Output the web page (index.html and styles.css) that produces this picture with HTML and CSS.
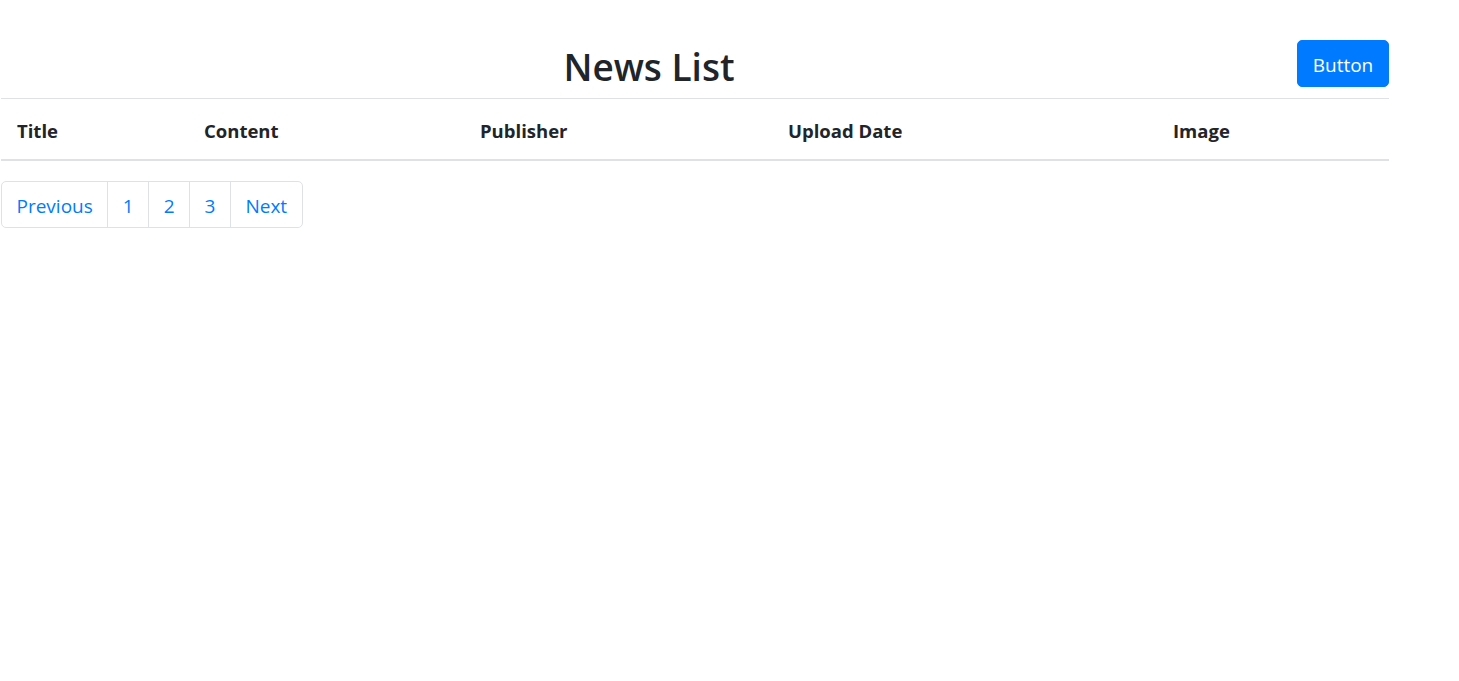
FILE: index.html
```html
<!DOCTYPE html>
<html lang="en">
<head>
<meta charset="utf-8">
<title>News List</title>
<link rel="stylesheet" href="styles.css">
</head>
<body>
<div class="page">
  <div class="header">
    <h1 class="title">News List</h1>
    <button class="btn" type="button">Button</button>
  </div>
  <table class="news-table">
    <colgroup>
      <col class="c-title"><col class="c-content"><col class="c-publisher"><col class="c-date"><col class="c-image">
    </colgroup>
    <thead>
      <tr>
        <th>Title</th>
        <th>Content</th>
        <th>Publisher</th>
        <th>Upload Date</th>
        <th>Image</th>
      </tr>
    </thead>
    <tbody></tbody>
  </table>
  <nav class="pagination">
    <a class="page-link" href="#">Previous</a>
    <a class="page-link" href="#">1</a>
    <a class="page-link" href="#">2</a>
    <a class="page-link" href="#">3</a>
    <a class="page-link" href="#">Next</a>
  </nav>
</div>
</body>
</html>
```
FILE: styles.css
```css
html, body {
  margin: 0;
  padding: 0;
  background: #fff;
}
body {
  font-family: "Open Sans", "Noto Sans", "Liberation Sans", sans-serif;
  color: #212529;
}
.page {
  width: 1388px;
  margin-left: 1px;
  padding-top: 40px;
}
.header {
  display: flex;
  align-items: flex-start;
  height: 47px;
}
.title {
  flex: 1;
  margin: 0;
  padding-top: 3px;
  text-align: center;
  font-size: 37px;
  font-weight: 600;
  line-height: 47px;
  color: #212529;
}
.btn {
  width: 92px;
  height: 47px;
  border: 1px solid #007bff;
  border-radius: 5px;
  background: #007bff;
  color: #fff;
  font-family: inherit;
  font-size: 19px;
  padding: 2px 0 0;
  cursor: pointer;
}
.news-table {
  margin-top: 11px;
  width: 1388px;
  border-collapse: collapse;
  table-layout: fixed;
}
.c-title { width: 187px; }
.c-content { width: 276px; }
.c-publisher { width: 308px; }
.c-date { width: 385px; }
.c-image { width: 232px; }
.news-table th {
  text-align: left;
  font-size: 18.5px;
  font-weight: 700;
  line-height: 29px;
  padding: 17px 16px 14px;
  border-top: 1px solid #dee2e6;
  border-bottom: 2px solid #dee2e6;
  color: #212529;
}
.pagination {
  display: flex;
  margin-top: 20px;
}
.page-link {
  display: block;
  height: 42px;
  line-height: 42px;
  padding: 3px 14.5px 0;
  border: 1px solid #dee2e6;
  margin-left: -1px;
  color: #007bff;
  text-decoration: none;
  font-size: 19px;
}
.page-link:first-child {
  margin-left: 0;
  border-radius: 5px 0 0 5px;
}
.page-link:last-child {
  border-radius: 0 5px 5px 0;
}
```
